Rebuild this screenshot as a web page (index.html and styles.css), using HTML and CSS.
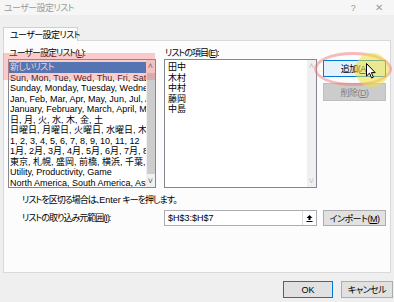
FILE: index.html
```html
<!DOCTYPE html>
<html lang="ja">
<head>
    <meta charset="UTF-8">
    <title>ユーザー設定リスト</title>
    <link rel="stylesheet" href="styles.css">
</head>
<body>
    <div class="titlebar">
        <span class="title">ユーザー設定リスト</span>
        <span class="help">?</span>
        <span class="close">✕</span>
    </div>
    <div class="tabs">
        <div class="tab">ユーザー設定リスト</div>
    </div>
    <div class="panel">
        <div class="lists">
            <div class="col-left">
                <div class="label">ユーザー設定リスト(<u>L</u>):</div>
                <div class="listbox">
                    <div class="rows">
                        <div class="row selected">新しいリスト</div>
                        <div class="row">Sun, Mon, Tue, Wed, Thu, Fri, Sat</div>
                        <div class="row">Sunday, Monday, Tuesday, Wednesday, Thursday</div>
                        <div class="row">Jan, Feb, Mar, Apr, May, Jun, Jul, Aug</div>
                        <div class="row">January, February, March, April, May</div>
                        <div class="row">日, 月, 火, 水, 木, 金, 土</div>
                        <div class="row">日曜日, 月曜日, 火曜日, 水曜日, 木曜日</div>
                        <div class="row">1, 2, 3, 4, 5, 6, 7, 8, 9, 10, 11, 12</div>
                        <div class="row">1月, 2月, 3月, 4月, 5月, 6月, 7月, 8月</div>
                        <div class="row">東京, 札幌, 盛岡, 前橋, 横浜, 千葉, 大阪</div>
                        <div class="row">Utility, Productivity, Game</div>
                        <div class="row">North America, South America, Asia</div>
                    </div>
                    <div class="scrollbar">
                        <span class="arrow">&#x2C4;</span>
                        <span class="thumb"></span>
                        <span class="arrow">&#x2C5;</span>
                    </div>
                </div>
            </div>
            <div class="col-mid">
                <div class="label">リストの項目(<u>E</u>):</div>
                <div class="listbox">
                    <div class="rows">
                        <div class="row">田中</div>
                        <div class="row">木村</div>
                        <div class="row">中村</div>
                        <div class="row">藤岡</div>
                        <div class="row">中島</div>
                    </div>
                    <div class="scrollbar disabled">
                        <span class="arrow">&#x2C4;</span>
                        <span class="track"></span>
                        <span class="arrow">&#x2C5;</span>
                    </div>
                </div>
            </div>
            <div class="col-btns">
                <button class="btn default">追加(<u>A</u>)</button>
                <button class="btn off">削除(<u>D</u>)</button>
            </div>
        </div>
        <div class="note">リストを区切る場合は、<span class="latin">Enter</span> キーを押します。</div>
        <div class="import-row">
            <div class="import-label">リストの取り込み元範囲(<u>I</u>):</div>
            <div class="range">
                <span class="range-text">$H$3:$H$7</span>
                <span class="collapse">
                    <svg width="9" height="9" viewBox="0 0 9 9">
                        <path d="M4.5 1 L1.5 4 H3.5 V6 H5.5 V4 H7.5 Z" fill="#000"/>
                        <rect x="1.5" y="7" width="6" height="1" fill="#000"/>
                    </svg>
                </span>
            </div>
            <button class="btn import">インポート(<u>M</u>)</button>
        </div>
    </div>
    <div class="footer">
        <button class="btn ok">OK</button>
        <button class="btn cancel">キャンセル</button>
    </div>

    <div class="mark-rect"></div>
    <div class="mark-ring"></div>
    <div class="mark-spot"></div>
    <svg class="cursor" width="10" height="16" viewBox="0 0 10 16">
        <path d="M0.5 0.5 V13 L3.5 10.2 L5.6 15 L7.4 14.2 L5.4 9.6 H9.2 Z" fill="#fff" stroke="#000" stroke-width="1"/>
    </svg>
</body>
</html>
```

FILE: styles.css
```css
body {
    margin: 0;
    width: 394px;
    height: 302px;
    overflow: hidden;
    position: relative;
    background: #efefef;
    font-family: "Liberation Sans", "Noto Sans CJK JP", sans-serif;
    font-feature-settings: "palt";
    font-size: 9px;
    letter-spacing: -1px;
    color: #000;
}
u {
    text-decoration: underline;
}
.latin {
    letter-spacing: 0;
}
.titlebar {
    height: 15px;
    display: flex;
    align-items: center;
    padding: 0 8px 0 4px;
    background: #f6f6f6;
    color: #9a9a9a;
    letter-spacing: -0.6px;
}
.title {
    flex: 1;
}
.help {
    width: 24px;
    margin-right: 7px;
    text-align: center;
}
.close {
    width: 14px;
    text-align: center;
    font-size: 10px;
}
.tabs {
    height: 25px;
    display: flex;
    align-items: flex-end;
    padding-left: 3px;
}
.tab {
    position: relative;
    z-index: 1;
    width: 75px;
    height: 14px;
    line-height: 14px;
    margin-bottom: -1px;
    box-sizing: border-box;
    padding-left: 6px;
    white-space: nowrap;
    letter-spacing: -0.6px;
    background: #fcfcfc;
    border: 1px solid #d0d0d0;
    border-bottom: none;
}
.panel {
    margin-left: 3px;
    width: 388px;
    height: 233px;
    box-sizing: border-box;
    padding: 6px 4px 0 4px;
    background: #fcfcfc;
    border: 1px solid #d9d9d9;
}
.lists {
    display: flex;
}
.col-left {
    width: 148px;
    margin-right: 8px;
}
.col-mid {
    width: 153px;
}
.col-btns {
    width: 63px;
    margin-left: 6px;
    padding-top: 13px;
    display: flex;
    flex-direction: column;
}
.label {
    height: 12px;
    line-height: 12px;
    padding-left: 1px;
    white-space: nowrap;
}
.listbox {
    height: 129px;
    box-sizing: border-box;
    border: 1px solid #828790;
    background: #fff;
    display: flex;
    overflow: hidden;
}
.rows {
    flex: 1;
    min-width: 0;
    padding-top: 2px;
    overflow: hidden;
    letter-spacing: 0;
}
.row {
    height: 10.5px;
    line-height: 10.5px;
    padding-left: 1px;
    white-space: nowrap;
    overflow: hidden;
}
.row.selected {
    background: #0078d7;
    color: #fff;
    letter-spacing: -0.6px;
}
.col-mid .row {
    padding-left: 3px;
}
.scrollbar {
    width: 9px;
    display: flex;
    flex-direction: column;
    align-items: center;
    background: #f0f0f0;
    letter-spacing: 0;
}
.scrollbar .arrow {
    height: 12px;
    line-height: 12px;
    font-size: 9px;
    color: #606060;
}
.scrollbar .thumb {
    flex: 1;
    width: 8px;
    margin: 1px 0;
    background: #cdcdcd;
}
.scrollbar .track {
    flex: 1;
}
.scrollbar.disabled .arrow {
    color: #bfbfbf;
}
.btn {
    font: inherit;
    font-feature-settings: "palt";
    letter-spacing: -0.5px;
    padding: 0;
    color: #000;
    background: #e1e1e1;
    border: 1px solid #adadad;
    box-sizing: border-box;
}
.btn.default {
    height: 17px;
    background: #e5f1fb;
    border-color: #0078d7;
}
.btn.off {
    height: 18px;
    margin-top: 6px;
    background: #cccccc;
    border-color: #bfbfbf;
    color: #838383;
}
.note {
    margin-top: 6px;
    height: 12px;
    line-height: 12px;
    padding-left: 14px;
}
.import-row {
    display: flex;
    align-items: center;
    margin-top: 4px;
}
.import-label {
    width: 156px;
    box-sizing: border-box;
    padding-left: 14px;
    margin-top: -2px;
    white-space: nowrap;
}
.range {
    width: 153px;
    height: 16px;
    box-sizing: border-box;
    border: 1px solid #abadb3;
    background: #fff;
    display: flex;
    align-items: center;
    letter-spacing: 0;
}
.range-text {
    flex: 1;
    padding-left: 3px;
}
.collapse {
    width: 14px;
    height: 14px;
    box-sizing: border-box;
    border-left: 1px solid #dadada;
    display: flex;
    align-items: center;
    justify-content: center;
}
.btn.import {
    width: 63px;
    height: 16px;
    margin-left: 6px;
}
.footer {
    display: flex;
    justify-content: flex-end;
    gap: 8px;
    padding: 8px 1px 0 0;
}
.btn.ok {
    width: 50px;
    height: 17px;
    border-color: #0078d7;
    letter-spacing: 0;
}
.btn.cancel {
    width: 52px;
    height: 17px;
}
.mark-rect {
    position: absolute;
    left: 3px;
    top: 53px;
    width: 152px;
    height: 27px;
    background: rgba(240, 110, 110, 0.35);
}
.mark-ring {
    position: absolute;
    left: 314px;
    top: 52px;
    width: 72px;
    height: 28px;
    border: 3px solid rgba(240, 120, 120, 0.5);
    border-radius: 50%;
}
.mark-spot {
    position: absolute;
    left: 355px;
    top: 53px;
    width: 34px;
    height: 34px;
    border-radius: 50%;
    background: rgba(236, 226, 60, 0.55);
}
.cursor {
    position: absolute;
    left: 366px;
    top: 63px;
}
```
